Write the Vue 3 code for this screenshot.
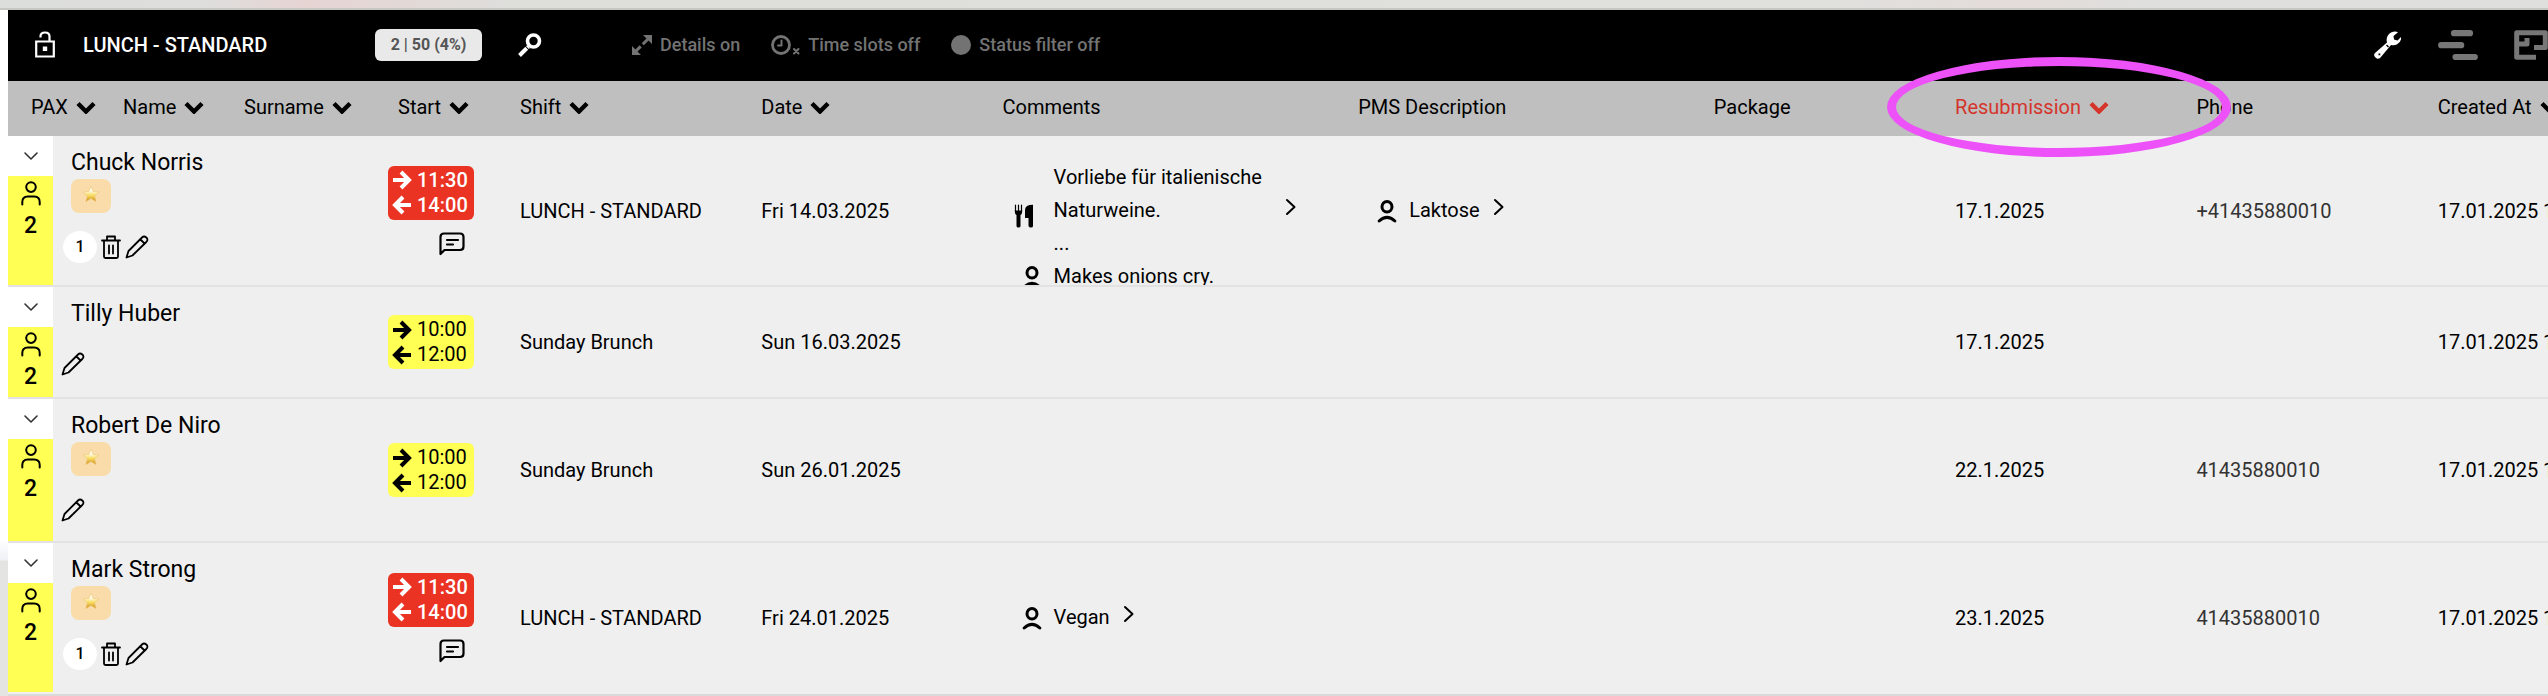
<script setup>
import { h } from 'vue'

const rows = [
  {
    name: 'Chuck Norris', star: true, count: 1, pax: 2, tone: 'red', from: '11:30', to: '14:00', note: true,
    shift: 'LUNCH - STANDARD', date: 'Fri 14.03.2025',
    comments: [
      { icon: 'food', text: 'Vorliebe für italienische\nNaturweine.\n...', more: true },
      { icon: 'guest', text: 'Makes onions cry.' },
    ],
    pms: [{ icon: 'guest', text: 'Laktose', more: true }],
    resubmission: '17.1.2025', phone: '+41435880010', created: '17.01.2025 1',
  },
  {
    name: 'Tilly Huber', pax: 2, tone: 'yellow', from: '10:00', to: '12:00',
    shift: 'Sunday Brunch', date: 'Sun 16.03.2025', comments: [], pms: [],
    resubmission: '17.1.2025', phone: '', created: '17.01.2025 1',
  },
  {
    name: 'Robert De Niro', star: true, pax: 2, tone: 'yellow', from: '10:00', to: '12:00',
    shift: 'Sunday Brunch', date: 'Sun 26.01.2025', comments: [], pms: [],
    resubmission: '22.1.2025', phone: '41435880010', created: '17.01.2025 1',
  },
  {
    name: 'Mark Strong', star: true, count: 1, pax: 2, tone: 'red', from: '11:30', to: '14:00', note: true,
    shift: 'LUNCH - STANDARD', date: 'Fri 24.01.2025',
    comments: [{ icon: 'guest', text: 'Vegan', more: true }], pms: [],
    resubmission: '23.1.2025', phone: '41435880010', created: '17.01.2025 1',
  },
]

const headers = [
  { key: 'pax', label: 'PAX', sort: true },
  { key: 'name', label: 'Name', sort: true },
  { key: 'surname', label: 'Surname', sort: true },
  { key: 'start', label: 'Start', sort: true },
  { key: 'shift', label: 'Shift', sort: true },
  { key: 'date', label: 'Date', sort: true },
  { key: 'comments', label: 'Comments' },
  { key: 'pms', label: 'PMS Description' },
  { key: 'package', label: 'Package' },
  { key: 'resubmission', label: 'Resubmission', sort: true },
  { key: 'phone', label: 'Phone' },
  { key: 'created', label: 'Created At', sort: true },
]

const line = (d, w = 2) => h('path', { d, fill: 'none', stroke: 'currentColor', 'stroke-width': w, 'stroke-linecap': 'round', 'stroke-linejoin': 'round' })
const solid = (d) => h('path', { d, fill: 'currentColor', 'fill-rule': 'evenodd' })
const icons = {
  sort: [20, 13, () => [h('path', { d: 'M2 2.5 10 10.5 18 2.5', fill: 'none', stroke: 'currentColor', 'stroke-width': 4.4 })]],
  down: [16, 10, () => [line('M2 2 8 8 14 2', 1.6)]],
  more: [12, 18, () => [line('M2 2 9.500 9 2 16', 2)]],
  person: [20, 25, () => [line('M10 1.300a4.800 4.800 0 1 1 0 9.600a4.800 4.800 0 0 1 0-9.600zM1.300 23.500V21q0-5.500 5.500-5.500h6.400q5.500 0 5.500 5.500v2.500', 2)]],
  guest: [20, 24, () => [line('M10 2.500a5 5.300 0 1 1 0 10.600a5 5.300 0 0 1 0-10.600zM2.200 22Q10 14.800 17.800 22', 3)]],
  food: [20, 24, () => [
    line('M1.500 1V7M4.500 1V7M7.500 1V7', 1.2),
    solid('M.8 6.500h7.400q0 4-1.700 4.500V22q0 1.500-2 1.500T2.500 22V11Q.8 10.500.8 6.500zM19 .8V22q0 1.500-2 1.500t-2.500-1.500V14H11V6Q11 .8 19 .8z'),
  ]],
  trash: [20, 24, () => [line('M1 5.500h18M6 5V1.500h8V5M3 6v15.500q0 1.500 1.500 1.500h11q1.500 0 1.500-1.500V6M8 10.500v8M12 10.500v8', 1.8)]],
  pencil: [24, 24, () => [line('M1.500 22.500 3.500 16 17 2.500q2-2 4.300 0t0 4.500L7.500 20.500zM15.500 4.500l4 4', 1.8)]],
  note: [26, 24, () => [line('M1.500 22V5q0-3.500 3.500-3.500h16q3.500 0 3.500 3.500v9.500q0 3.500-3.500 3.500H5.500zM8 8h11M8 12.500h6', 2.2)]],
  arrowIn: [20, 20, () => [h('path', { d: 'M1 10H16M9 2l8 8-8 8', fill: 'none', stroke: 'currentColor', 'stroke-width': 4 })]],
  arrowOut: [20, 20, () => [h('path', { d: 'M19 10H4M11 2l-8 8 8 8', fill: 'none', stroke: 'currentColor', 'stroke-width': 4 })]],
  lock: [20, 27, () => [h('path', { d: 'M1.200 10.500h17.600v15H1.200zM5.500 6.500V5.500q0-4 4.500-4t4.500 4v5', fill: 'none', stroke: 'currentColor', 'stroke-width': 2.2 }), solid('M7.800 15.500h4.400v4.500H7.800z')]],
  search: [24, 24, () => [h('circle', { cx: 15.5, cy: 8, r: 6, fill: 'none', stroke: 'currentColor', 'stroke-width': 3.6 }), h('path', { d: 'M10.500 13.500 1.500 22.500', stroke: 'currentColor', 'stroke-width': 4, 'stroke-dasharray': '1.500 1 20' })]],
  expand: [20, 20, () => [h('path', { d: 'M3 17 17 3', stroke: 'currentColor', 'stroke-width': 3, 'stroke-dasharray': '8 3 20' }), solid('M11 0h9v9l-3-3-3-3zM0 11v9h9l-3-3-3-3z')]],
  clock: [29, 20, () => [h('circle', { cx: 10, cy: 10, r: 8.5, fill: 'none', stroke: 'currentColor', 'stroke-width': 2.8 }), line('M10.500 5.500V10.500H7', 2), line('M23 14l4.500 4.500M27.500 14 23 18.500', 2)]],
  dot: [20, 20, () => [h('circle', { cx: 10, cy: 10, r: 10, fill: 'currentColor' })]],
  wrench: [28, 28, () => [solid('M27 8.500A8 8 0 0 1 17 14L6.500 26.500Q4 29 1.500 26.500T1 22L13 11.500A8.500 8.500 0 0 1 21.500.5L24 1.200 19.500 5 20 8.500 23.500 9.500 27 6zM4.500 22.500v1.800h1.800v-1.800zM12 14.500l2 2 1-1-2-2z')]],
  bars: [40, 30, () => [line('M16 3.200h16M3.200 15.200h20M17.500 27h19.300', 6.2)]],
  plan: [34, 30, () => [h('path', { d: 'M22 27.300H2.700V2.700H31.300V17.500H20M2.700 14H13V8', fill: 'none', stroke: 'currentColor', 'stroke-width': 5, 'stroke-linejoin': 'round' })]],
}
const Icon = ({ name }) => {
  const [w, ht, draw] = icons[name]
  return h('svg', { width: w, height: ht, viewBox: `0 0 ${w} ${ht}`, 'aria-hidden': 'true' }, draw())
}
Icon.props = ['name']
</script>

<template>
  <main class="page">
    <div class="backdrop"></div>
    <section class="panel">
      <header class="toolbar">
        <button class="lock" aria-label="Unlock"><Icon name="lock" /></button>
        <h1>LUNCH - STANDARD</h1>
        <span class="load">2 | 50 (4%)</span>
        <button class="search" aria-label="Search"><Icon name="search" /></button>
        <div class="filters">
          <button class="filter"><Icon name="expand" />Details on</button>
          <button class="filter"><Icon name="clock" />Time slots off</button>
          <button class="filter"><Icon name="dot" />Status filter off</button>
        </div>
        <nav class="views">
          <button class="active" aria-label="Settings"><Icon name="wrench" /></button>
          <button aria-label="Timeline"><Icon name="bars" /></button>
          <button aria-label="Floor plan"><Icon name="plan" /></button>
        </nav>
      </header>

      <table>
        <colgroup>
          <col v-for="c in headers" :key="c.key" :class="'col-' + c.key" />
        </colgroup>
        <thead>
          <tr>
            <th v-for="c in headers" :key="c.key" scope="col" :class="'th-' + c.key">
              <button v-if="c.sort" class="sort">{{ c.label }}<Icon name="sort" /></button>
              <template v-else>{{ c.label }}</template>
              <span v-if="c.key === 'resubmission'" class="ring"></span>
            </th>
          </tr>
        </thead>
        <tbody>
          <tr v-for="r in rows" :key="r.name" :class="{ tall: r.count }">
            <td class="pax">
              <button class="toggle" aria-label="Expand"><Icon name="down" /></button>
              <div class="guests"><Icon name="person" />{{ r.pax }}</div>
            </td>
            <td class="who" colspan="2">
              <div class="name">{{ r.name }}</div>
              <div v-if="r.star" class="star">
                <svg width="18" height="18" viewBox="0 0 18 18" aria-hidden="true">
                  <defs>
                    <linearGradient id="gold" x1="0" y1="0" x2="0" y2="1">
                      <stop offset="0.3" stop-color="#fffbe8" />
                      <stop offset="0.6" stop-color="#f8dc60" />
                      <stop offset="1" stop-color="#d08a1c" />
                    </linearGradient>
                  </defs>
                  <path d="M9 1.200 11.200 6.500 17 7 12.600 10.800 14 16.500 9 13.500 4 16.500 5.400 10.800 1 7 6.800 6.500z" fill="url(#gold)" stroke="#e6bf68" stroke-width="0.5" />
                </svg>
              </div>
              <div class="actions">
                <span v-if="r.count" class="count">{{ r.count }}</span>
                <button v-if="r.count" aria-label="Delete"><Icon name="trash" /></button>
                <button aria-label="Edit"><Icon name="pencil" /></button>
              </div>
            </td>
            <td class="start">
              <div class="slot" :class="r.tone">
                <span><Icon name="arrowIn" />{{ r.from }}</span>
                <span><Icon name="arrowOut" />{{ r.to }}</span>
              </div>
              <button v-if="r.note" class="note" aria-label="Message"><Icon name="note" /></button>
            </td>
            <td>{{ r.shift }}</td>
            <td>{{ r.date }}</td>
            <td v-for="list in [r.comments, r.pms]" :key="list === r.pms ? 'pms' : 'comments'">
              <div :class="{ clipped: list.length > 1 }">
                <div v-for="c in list" :key="c.text" class="remark">
                  <span class="kind" :class="c.icon"><Icon :name="c.icon" /></span>
                  <span class="text">{{ c.text }}</span>
                  <button v-if="c.more" class="more" aria-label="Show more"><Icon name="more" /></button>
                </div>
              </div>
            </td>
            <td></td>
            <td>{{ r.resubmission }}</td>
            <td><a v-if="r.phone" :href="'tel:' + r.phone">{{ r.phone }}</a></td>
            <td>{{ r.created }}</td>
          </tr>
        </tbody>
      </table>
    </section>
  </main>
</template>

<style>
body {
  background: #dadada;
}
</style>

<style scoped>
.page {
  overflow: hidden;
  font-family: Roboto, "Liberation Sans", sans-serif;
  font-size: 20px;
  color: #000;
}
.page svg {
  display: block;
  flex: none;
}
.backdrop {
  height: 8px;
  border-bottom: 2px solid #c6c6c2;
  background: linear-gradient(90deg, #dcdedb 0, #dededc 8%, #e6d4d3 12%, #dededb 20%, #e0e0dd 72%, #e4dcda 79%, #dfdfdd 84%);
}
.panel {
  padding-left: 8px;
  background: linear-gradient(#fff 530px, #eef1f6 550px, #e4e4e3 551px);
}
button {
  display: inline-flex;
  align-items: center;
  padding: 0;
  border: 0;
  background: none;
  color: inherit;
  font: inherit;
}
.toolbar {
  box-sizing: border-box;
  display: flex;
  align-items: center;
  height: 71px;
  padding: 0 0 2px 27px;
  background: #000;
  color: #fff;
}
h1 {
  width: 292px;
  margin: 0 0 0 28px;
  font-size: 20px;
  font-weight: 500;
}
.load {
  box-sizing: border-box;
  width: 107px;
  border-radius: 6px;
  background: #e9e9e9;
  color: #555;
  font-size: 16px;
  font-weight: 700;
  line-height: 32px;
  text-align: center;
}
.search {
  margin-left: 36px;
}
.filters {
  display: flex;
  gap: 31px;
  margin-left: 90px;
  color: #737373;
  font-size: 18px;
  font-weight: 500;
}
.filter {
  gap: 8px;
}
.views {
  display: flex;
  align-items: center;
  gap: 36px;
  margin-left: auto;
  color: #777;
}
.views .active {
  color: #fff;
}
table {
  width: 100%;
  table-layout: fixed;
  border-collapse: separate;
  border-spacing: 0;
  background: #efefef;
  border-bottom: 4px solid #dadada;
}
.col-pax { width: 45px; }
.col-name { width: 176px; }
.col-surname { width: 154px; }
.col-start { width: 122px; }
.col-shift, .col-date, .col-package, .col-resubmission, .col-phone { width: 9.5%; }
.col-comments, .col-pms { width: 14%; }
th {
  box-sizing: border-box;
  height: 55px;
  padding: 0 0 3px 15px;
  background: #bfbfbf;
  font-weight: 400;
  text-align: left;
  white-space: nowrap;
}
.th-pax { padding-left: 23px; }
.th-name { padding-left: 70px; }
.th-resubmission {
  position: relative;
  z-index: 1;
  color: #d5342b;
}
.ring {
  position: absolute;
  top: -24px;
  left: -53px;
  box-sizing: border-box;
  width: 344px;
  height: 100px;
  border: 9px solid #ec52f8;
  border-radius: 50%;
  pointer-events: none;
}
.sort {
  gap: 8px;
}
td {
  box-sizing: border-box;
  height: 112px;
  padding: 0 0 0 15px;
  border-bottom: 2px solid #e2e2e2;
  white-space: nowrap;
}
.tall td {
  height: 151px;
}
tbody tr:last-child td {
  border-bottom-color: #efefef;
}
td.pax {
  padding: 0;
  background: #ffff54;
  vertical-align: top;
}
.toggle,
.guests {
  display: flex;
}
.toggle {
  justify-content: center;
  width: 100%;
  height: 40px;
  background: #fff;
  color: #333;
}
.guests {
  flex-direction: column;
  align-items: center;
  gap: 6px;
  padding-top: 5px;
  font-size: 23px;
  font-weight: 500;
  line-height: 28px;
}
td.who {
  padding: 11px 0 0 18px;
  vertical-align: top;
}
.name {
  font-size: 23px;
  line-height: 32px;
}
.star {
  display: flex;
  align-items: center;
  justify-content: center;
  width: 40px;
  height: 34px;
  padding-bottom: 4px;
  box-sizing: border-box;
  border-radius: 8px;
  background: #f9dca9;
}
.actions {
  display: flex;
  align-items: center;
  gap: 4px;
  min-height: 32px;
  margin: 18px 0 15px -10px;
}
.count {
  width: 34px;
  margin: 0 0 0 2px;
  border-radius: 50%;
  background: #fff;
  font-size: 16px;
  font-weight: 500;
  line-height: 32px;
  text-align: center;
}
td.start {
  padding: 0 31px 0 5px;
}
.slot {
  padding: 2px 3px 2px 4px;
  border-radius: 6px;
  line-height: 25px;
}
.slot span {
  display: flex;
  align-items: center;
  gap: 5px;
}
.slot.red {
  background: #ea3323;
  color: #fff;
  font-weight: 500;
}
.slot.yellow {
  background: #ffff54;
}
.note {
  display: flex;
  margin: 12px 9px 0 auto;
}
.clipped {
  box-sizing: border-box;
  height: 149px;
  padding-top: 25px;
  overflow: hidden;
}
.remark {
  display: flex;
  align-items: center;
  line-height: 33px;
}
.kind {
  display: flex;
  box-sizing: border-box;
  justify-content: flex-end;
  width: 51px;
  padding-right: 12px;
}
.kind.food {
  padding: 10px 20px 0 0;
}
.text {
  white-space: pre-line;
}
.food + .text {
  width: 218px;
}
.more {
  margin: 0 0 8px 13px;
}
a {
  color: #333;
  text-decoration: none;
}
</style>
